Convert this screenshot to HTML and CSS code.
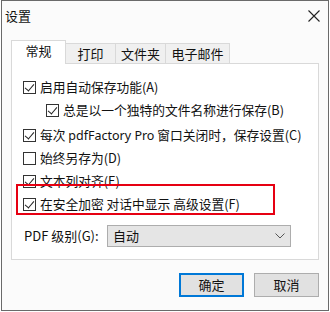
FILE: index.html
```html
<!DOCTYPE html>
<html lang="zh-CN">
<head>
<meta charset="utf-8">
<link rel="stylesheet" href="styles.css">
</head>
<body>
<div class="window">
  <div class="titlebar">
    <span class="title">设置</span>
    <svg class="close" width="12" height="12" viewBox="0 0 12 12"><path d="M0.5 0.5 L11.5 11.5 M11.5 0.5 L0.5 11.5" stroke="#222" stroke-width="1.1" fill="none"/></svg>
  </div>
  <div class="tabs">
    <div class="tab active t1">常规</div>
    <div class="tab t2">打印</div>
    <div class="tab t3">文件夹</div>
    <div class="tab t4">电子邮件</div>
  </div>
  <div class="panel">
    <label class="row"><span class="box checked"></span><span class="txt">启用自动保存功能(A)</span></label>
    <label class="row indent"><span class="box checked"></span><span class="txt">总是以一个独特的文件名称进行保存(B)</span></label>
    <label class="row"><span class="box checked"></span><span class="txt">每次 <span class="latin">pdfFactory Pro</span> 窗口关闭时，保存设置(C)</span></label>
    <label class="row"><span class="box"></span><span class="txt">始终另存为(D)</span></label>
    <label class="row gap5"><span class="box checked"></span><span class="txt">文本列对齐(E)</span></label>
    <label class="row"><span class="box checked"></span><span class="txt">在安全加密 对话中显示 高级设置(F)</span></label>
    <div class="highlight"></div>
    <div class="level">
      <span class="lvl-label">PDF 级别(G):</span>
      <div class="select"><span>自动</span>
        <svg class="chev" width="10" height="6" viewBox="0 0 10 6"><path d="M0.5 0.5 L5 5 L9.5 0.5" stroke="#555" stroke-width="1" fill="none"/></svg>
      </div>
    </div>
  </div>
  <div class="buttons">
    <button class="btn primary">确定</button>
    <button class="btn">取消</button>
  </div>
</div>
</body>
</html>
```

FILE: styles.css
```css
* { box-sizing: border-box; }
html, body { margin: 0; padding: 0; background: #ffffff; }
body {
  font-family: "Noto Sans CJK SC", "Noto Sans", sans-serif;
  font-size: 13px;
  color: #111;
}
.window {
  margin-left: 1px;
  width: 328px;
  height: 311px;
  border: 1px solid #6a6a6a;
  background: #fbfbfb;
}
.titlebar {
  height: 29px;
  display: flex;
  align-items: center;
  justify-content: space-between;
  padding: 0 8px 0 3px;
}
.title { font-size: 13px; line-height: 14px; }
.tabs {
  display: flex;
  align-items: flex-end;
  margin-top: 10px;
  padding-left: 9px;
  height: 23px;
}
.tab {
  height: 20px;
  border: 1px solid #d9d9d9;
  border-bottom: none;
  background: #f0f0f0;
  display: flex;
  align-items: center;
  justify-content: center;
  line-height: 14px;
  margin-left: -1px;
}
.tab.active {
  margin-left: 0;
  background: #fff;
  position: relative;
  z-index: 2;
  margin-bottom: -1px;
  height: 24px;
  padding-bottom: 3px;
}
.t1 { width: 55px; }
.t2 { width: 51px; }
.t3 { width: 51px; }
.t4 { width: 65px; }
.panel {
  position: relative;
  margin-left: 9px;
  width: 308px;
  height: 197px;
  border: 1px solid #d9d9d9;
  background: #fff;
  padding: 16px 0 0 11px;
}
.row {
  display: flex;
  align-items: center;
  height: 14px;
  margin-bottom: 9px;
  white-space: nowrap;
}
.row.indent { margin-left: 23px; margin-bottom: 11px; }
.gap5 { margin-top: 1px; }
.box {
  width: 13px;
  height: 13px;
  border: 1px solid #333;
  background: #fff;
  flex: none;
  position: relative;
}
.box.checked::after {
  content: "";
  position: absolute;
  left: 3px;
  top: 0px;
  width: 4px;
  height: 8px;
  border-right: 1.2px solid #222;
  border-bottom: 1.2px solid #222;
  transform: rotate(40deg);
}
.txt { margin-left: 4px; line-height: 14px; font-size: 12.75px; }
.latin { font-family: "Noto Sans", "Noto Sans CJK SC", sans-serif; font-size: 12.5px; }
.highlight {
  position: absolute;
  left: 4px;
  top: 120px;
  width: 259px;
  height: 31px;
  border: 2px solid #e60012;
}
.level {
  display: flex;
  align-items: center;
  margin-top: 14px;
}
.lvl-label { width: 84px; line-height: 14px; padding-left: 1px; }
.select {
  width: 184px;
  height: 22px;
  background: #e5e5e5;
  border: 1px solid #adadad;
  display: flex;
  align-items: center;
  justify-content: space-between;
  padding: 0 5px;
  line-height: 14px;
}
.buttons {
  display: flex;
  justify-content: flex-end;
  gap: 10px;
  padding-right: 9px;
  margin-top: 13px;
}
.btn {
  width: 65px;
  height: 24px;
  background: #e1e1e1;
  border: 1px solid #adadad;
  font-family: "Noto Sans CJK SC", "Noto Sans", sans-serif;
  font-size: 13px;
  color: #111;
  padding: 0;
  line-height: 14px;
}
.btn.primary { border: 2px solid #0078d7; }
```
